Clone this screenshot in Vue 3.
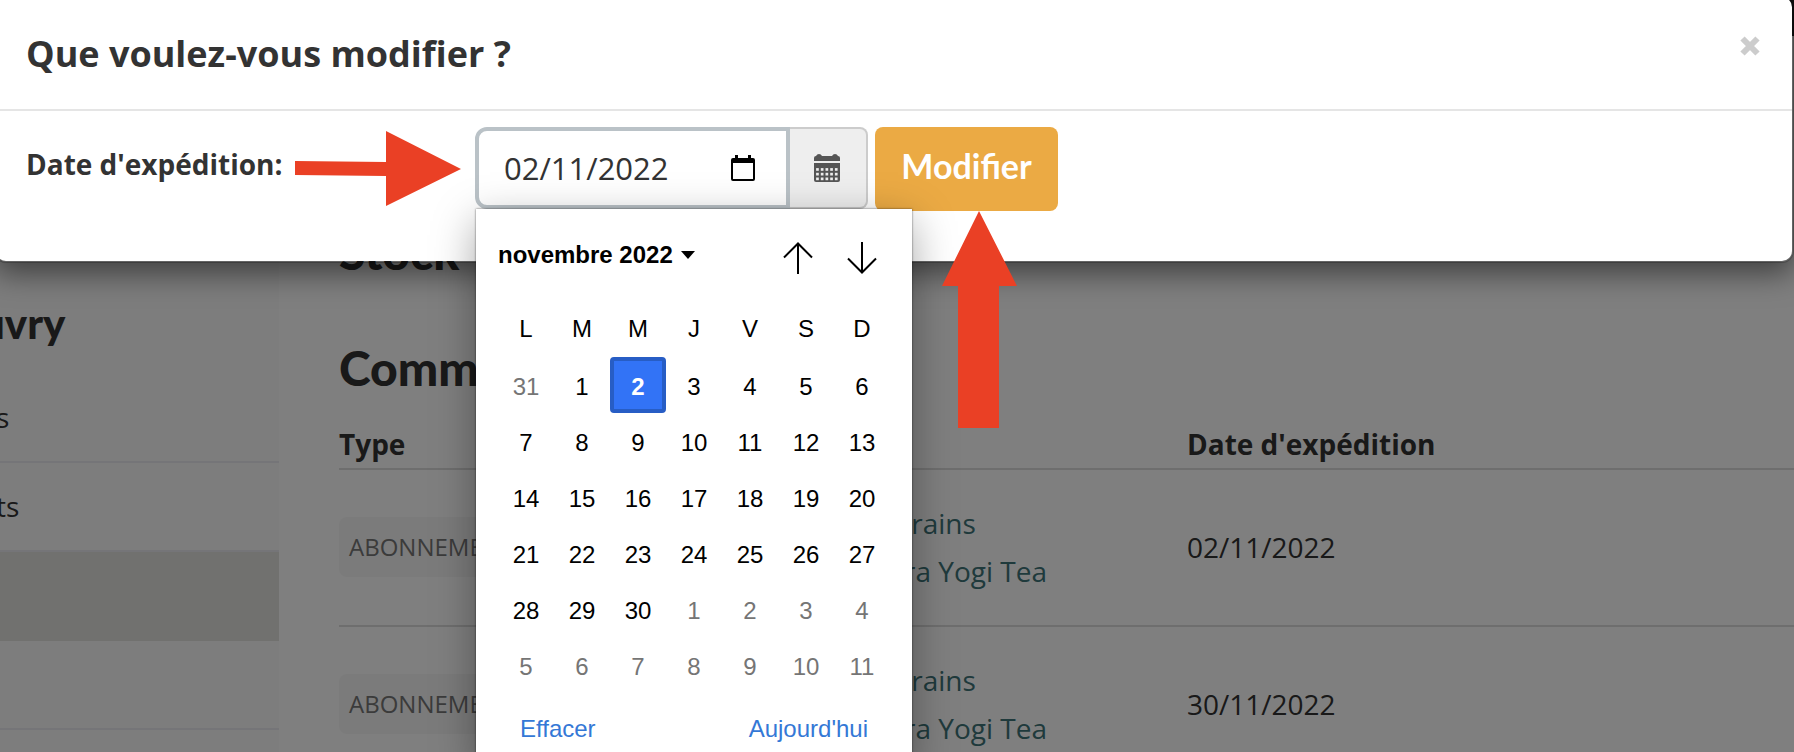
<template>
    <div class="page">
        <div class="navbar"></div>
        <div class="layout">
            <aside class="sidebar">
                <h3 class="sidebar-title">uvry</h3>
                <ul class="sidebar-items">
                    <li v-for="(item, index) in menuItems" :key="index" class="sidebar-item"
                        :class="{ active: index === activeMenu }">
                        <a href="#">{{ item }}</a>
                    </li>
                </ul>
            </aside>

            <main class="content">
                <h2 class="content-title">Stock</h2>
                <h2 class="content-title">Comm</h2>
                <table class="orders">
                    <thead>
                        <tr>
                            <th class="col-type">Type</th>
                            <th class="col-products"></th>
                            <th>Date d'expédition</th>
                        </tr>
                    </thead>
                    <tbody>
                        <tr v-for="order in orders" :key="order.date">
                            <td><span class="badge">ABONNEME</span></td>
                            <td>
                                <a href="#" class="product">&nbsp;rains</a>
                                <a href="#" class="product">ra Yogi Tea</a>
                            </td>
                            <td>{{ order.date }}</td>
                        </tr>
                    </tbody>
                </table>
            </main>
        </div>

        <div class="backdrop">
            <div class="modal" role="dialog" aria-labelledby="modal-title">
                <div class="modal-header">
                    <h4 id="modal-title" class="modal-title">Que voulez-vous modifier ?</h4>
                    <button type="button" class="close" aria-label="Fermer">
                        <svg width="20" height="20" viewBox="0 0 20 20">
                            <path d="M2.5 2.5L17.5 17.5M17.5 2.5L2.5 17.5" stroke="#ccc" stroke-width="6" />
                        </svg>
                    </button>
                </div>

                <form class="modal-body" @submit.prevent>
                    <div class="label-column">
                        <label for="shipping-date">Date d'expédition:</label>
                        <svg width="166" height="76" viewBox="0 0 166 76">
                            <path d="M0 30L91 31V0L166 38L91 75V45L0 44Z" fill="#ea4025" />
                        </svg>
                    </div>

                    <div class="date-group">
                        <div class="date-field">
                            <input id="shipping-date" v-model="shippingDate" type="text">
                            <button type="button" class="picker-toggle" aria-label="Choisir une date" @click="pickerOpen = !pickerOpen">
                                <svg width="24" height="26" viewBox="0 0 24 26">
                                    <path d="M4 0H7V3H17V0H20V3H22Q24 3 24 5V24Q24 26 22 26H2Q0 26 0 24V5Q0 3 2 3H4ZM2 8V24H22V8Z"
                                        fill="#000" fill-rule="evenodd" />
                                </svg>
                            </button>
                        </div>
                        <span class="addon">
                            <svg width="26" height="28" viewBox="0 0 26 28">
                                <path d="M0 7V4Q0 2 2 2Q3 0 5 0Q7 0 8 2H18Q19 0 21 0Q23 0 24 2Q26 2 26 4V7Z" fill="#555" />
                                <path d="M0 9H26V26Q26 28 24 28H2Q0 28 0 26Z" fill="#555" />
                                <g fill="#eee">
                                    <template v-for="y in 3" :key="y">
                                        <rect v-for="x in 5" :key="x" :x="x * 4.7 - 2.6" :y="y * 4.7 + 9.4" width="2.7" height="2.7" />
                                    </template>
                                </g>
                            </svg>
                        </span>

                        <div v-show="pickerOpen" class="picker">
                            <div class="picker-header">
                                <button type="button" class="picker-month">
                                    novembre 2022
                                    <svg width="14" height="8" viewBox="0 0 14 8">
                                        <path d="M0 0H14L7 8Z" />
                                    </svg>
                                </button>
                                <div class="picker-nav">
                                    <button type="button" aria-label="Mois précédent">
                                        <svg width="30" height="32" viewBox="0 0 30 32">
                                            <path d="M15 32V1.5M1 15.5L15 1.5L29 15.5" />
                                        </svg>
                                    </button>
                                    <button type="button" aria-label="Mois suivant">
                                        <svg width="30" height="32" viewBox="0 0 30 32">
                                            <path d="M15 0V30.5M1 16.5L15 30.5L29 16.5" />
                                        </svg>
                                    </button>
                                </div>
                            </div>
                            <table class="picker-days">
                                <thead>
                                    <tr>
                                        <th v-for="(day, index) in weekDays" :key="index">{{ day }}</th>
                                    </tr>
                                </thead>
                                <tbody>
                                    <tr v-for="(week, index) in weeks" :key="index">
                                        <td v-for="day in week" :key="day.key">
                                            <button type="button" class="day"
                                                :class="{ outside: day.outside, selected: day.selected }">{{ day.label }}</button>
                                        </td>
                                    </tr>
                                </tbody>
                            </table>
                            <div class="picker-footer">
                                <button type="button">Effacer</button>
                                <button type="button">Aujourd'hui</button>
                            </div>
                        </div>
                    </div>

                    <div class="submit-group">
                        <button type="submit" class="btn-submit">Modifier</button>
                        <svg class="arrow-up" width="75" height="217" viewBox="0 0 75 217">
                            <path d="M37 0L75 75H57V217H16V75H0Z" fill="#ea4025" />
                        </svg>
                    </div>
                </form>
            </div>
        </div>
    </div>
</template>

<script setup>
import { ref } from 'vue';

const shippingDate = ref('02/11/2022');
const pickerOpen = ref(true);

const activeMenu = 2;
const menuItems = ['s', 'ts', '', '', ''];

const orders = [
    { date: '02/11/2022' },
    { date: '30/11/2022' },
];

const weekDays = ['L', 'M', 'M', 'J', 'V', 'S', 'D'];

// six weeks, starting on monday 31 october
const weeks = Array.from({ length: 6 }, (_, week) =>
    Array.from({ length: 7 }, (_, weekDay) => {
        const date = new Date(2022, 9, 31 + week * 7 + weekDay);
        const outside = date.getMonth() !== 10;
        return {
            key: week * 7 + weekDay,
            label: date.getDate(),
            outside,
            selected: !outside && date.getDate() === 2,
        };
    })
);
</script>

<style>
body {
    margin: 0;
}
</style>

<style scoped>
.page {
    position: relative;
    height: 100vh;
    overflow: hidden;
    background-color: #fff;
    color: #333;
    font-family: "Open Sans", sans-serif;
    font-size: 28px;
}

button {
    border: 0;
    padding: 0;
    background: none;
    font: inherit;
    color: inherit;
    cursor: pointer;
}

svg {
    display: block;
    flex-shrink: 0;
}

h2,
h3,
h4 {
    margin: 0;
}

.navbar {
    height: 36px;
    background-color: #222;
}

.layout {
    display: flex;
}

.sidebar {
    width: 279px;
    flex-shrink: 0;
    padding-top: 267px;
    background-color: #fafafa;
}

.sidebar-title {
    margin-bottom: 31px;
    text-indent: -19px;
    font-family: Lato, sans-serif;
    font-size: 42px;
    font-weight: 900;
    line-height: 40px;
}

.sidebar-items {
    margin: 0;
    padding: 0;
    list-style: none;
}

.sidebar-item {
    height: 87px;
    border-bottom: 2px solid #ebebf0;
    line-height: 87px;
    text-indent: -4px;
}

.sidebar-item.active {
    background-color: #e3e3df;
    border-color: #e3e3df;
}

.sidebar-item a {
    color: #333;
    text-decoration: none;
}

.content {
    flex: 1;
    min-width: 0;
    padding: 187px 0 0 60px;
}

.content-title {
    margin-bottom: 58px;
    font-family: Lato, sans-serif;
    font-size: 48px;
    font-weight: 900;
    line-height: 58px;
}

.content-title + .content-title {
    margin-bottom: 28px;
}

.orders {
    width: 100%;
    table-layout: fixed;
    border-spacing: 0;
}

.orders th {
    padding: 0 0 5px;
    border-bottom: 2px solid #ddd;
    line-height: 38px;
    text-align: left;
}

.orders td {
    height: 153px;
    padding: 0 0 2px;
    border-bottom: 2px solid #ddd;
    line-height: 48px;
}

.col-type {
    width: 565px;
}

.col-products {
    width: 283px;
}

.badge {
    display: inline-block;
    padding: 0 10px;
    border-radius: 8px;
    background-color: #f7f7f7;
    color: #777;
    font-size: 24px;
    line-height: 60px;
    vertical-align: middle;
}

.product {
    display: block;
    color: #3f7478;
    text-decoration: none;
}

.backdrop {
    position: absolute;
    inset: 0;
    background-color: rgba(0, 0, 0, 0.5);
}

.modal {
    margin: -5px 0 0 -6px;
    border: 2px solid rgba(0, 0, 0, 0.2);
    border-radius: 12px;
    background-color: #fff;
    background-clip: padding-box;
    box-shadow: 0 10px 30px rgba(0, 0, 0, 0.5);
}

.modal-header {
    display: flex;
    justify-content: space-between;
    padding: 32px 32px 30px 30px;
    border-bottom: 2px solid #e5e5e5;
}

.modal-title {
    font-size: 36px;
    line-height: 50px;
}

.close {
    align-self: flex-start;
    padding-top: 7px;
}

.modal-body {
    display: flex;
    align-items: flex-start;
    padding: 16px 30px 50px;
}

.label-column {
    display: flex;
    justify-content: space-between;
    width: 435px;
    padding: 4px 14px 0 0;
}

.label-column label {
    font-weight: 700;
    line-height: 66px;
}

.date-group {
    position: relative;
    display: flex;
    margin-right: 7px;
}

.date-field {
    display: flex;
    align-items: center;
    box-sizing: border-box;
    width: 315px;
    height: 82px;
    padding: 0 31px 0 25px;
    border: 4px solid #bac2c7;
    border-radius: 12px 0 0 12px;
}

.date-field input {
    flex: 1;
    min-width: 0;
    padding: 0;
    border: 0;
    outline: 0;
    background: none;
    color: #333;
    font-family: inherit;
    font-size: 31px;
}

.addon {
    display: flex;
    align-items: center;
    justify-content: center;
    box-sizing: border-box;
    width: 78px;
    height: 82px;
    padding-right: 2px;
    border: 2px solid #ccc;
    border-left: 0;
    border-radius: 0 8px 8px 0;
    background-color: #eee;
}

.submit-group {
    position: relative;
}

.btn-submit {
    width: 183px;
    height: 84px;
    padding-bottom: 8px;
    border-radius: 8px;
    background-color: #ebaa44;
    color: #fff;
    font-family: Lato, sans-serif;
    font-size: 34px;
    font-weight: 700;
}

.arrow-up {
    position: absolute;
    top: 84px;
    left: 67px;
    z-index: 2;
}

.picker {
    position: absolute;
    top: 82px;
    left: 1px;
    z-index: 1;
    padding: 0 22px;
    background-color: #fff;
    box-shadow: 0 0 2px rgba(0, 0, 0, 0.6), 0 12px 40px rgba(0, 0, 0, 0.35);
    color: #000;
    font-family: "Liberation Sans", Arial, sans-serif;
    font-size: 24px;
}

.picker-header {
    display: flex;
    align-items: center;
    justify-content: space-between;
    height: 92px;
}

.picker-month {
    display: flex;
    align-items: center;
    gap: 8px;
    font-weight: 700;
}

.picker-nav {
    display: flex;
    gap: 34px;
    padding: 5px 13px 0 0;
}

.picker-nav path {
    fill: none;
    stroke: #000;
    stroke-width: 2;
}

.picker-days {
    border-spacing: 0;
}

.picker-days th,
.picker-days td {
    width: 56px;
    height: 56px;
    padding: 0;
    font-weight: 400;
    text-align: center;
}

.day {
    display: block;
    box-sizing: border-box;
    width: 56px;
    height: 56px;
    padding-top: 3px;
    border: 4px solid transparent;
    border-radius: 4px;
}

.day.outside {
    color: #757575;
}

.day.selected {
    border-color: #275dc5;
    background-color: #3273f6;
    color: #fff;
    font-weight: 700;
}

.picker-footer {
    display: flex;
    align-items: center;
    justify-content: space-between;
    height: 71px;
    padding: 0 22px;
    color: #3478d6;
}
</style>
